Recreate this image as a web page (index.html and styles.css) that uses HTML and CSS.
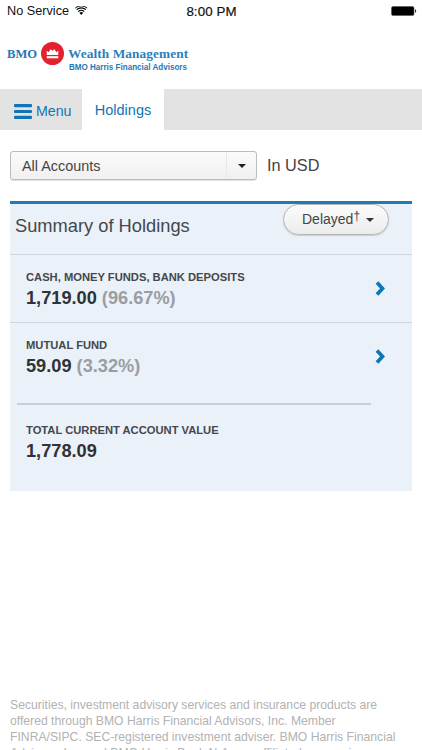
FILE: index.html
```html
<!DOCTYPE html>
<html lang="en">
<head>
<meta charset="utf-8">
<title>Holdings</title>
<link rel="stylesheet" href="styles.css">
</head>
<body>
<div class="screen">
  <div class="status">
    <div class="status-left">
      <span>No Service</span>
      <svg class="wifi" width="12.5" height="9" viewBox="0 0 14 10"><path d="M7 10 4.9 7.6a3 3 0 0 1 4.2 0Z" fill="#000"/><path d="M3.7 6.2a4.8 4.8 0 0 1 6.6 0" fill="none" stroke="#000" stroke-width="1.3"/><path d="M1.8 4.1a7.6 7.6 0 0 1 10.4 0" fill="none" stroke="#000" stroke-width="1.3"/><path d="M.4 2.2a10 10 0 0 1 13.2 0" fill="none" stroke="#000" stroke-width="1.1"/></svg>
    </div>
    <div class="status-time">8:00 PM</div>
    <div class="status-right">
      <svg width="26" height="10" viewBox="0 0 26 10"><rect x=".5" y=".5" width="22.5" height="9" rx="1.5" fill="#000" stroke="#555" stroke-width=".6"/><path d="M24 3.5h.5a.6.6 0 0 1 .6.6v1.8a.6.6 0 0 1-.6.6H24Z" fill="#333"/></svg>
    </div>
  </div>

  <header class="brand">
    <span class="bmo">BMO</span>
    <svg class="roundel" width="23" height="23" viewBox="0 0 24 24"><circle cx="12" cy="12" r="12" fill="#e5202e"/><path d="M6 17v-2.2h12V17Z" fill="#fff"/><path d="M6 13.6V9.2l2 1.5L10 7.6l2 1.6 2-1.6 2 3.1 2-1.5v4.4Z" fill="#fff"/></svg>
    <div class="brand-text">
      <div class="brand-main">Wealth Management</div>
      <div class="brand-sub">BMO Harris Financial Advisors</div>
    </div>
  </header>

  <nav class="tabs">
    <div class="tab-menu">
      <svg width="18" height="15" viewBox="0 0 18 15"><rect width="18" height="3.2" rx="1" fill="#0f75b3"/><rect y="5.9" width="18" height="3.2" rx="1" fill="#0f75b3"/><rect y="11.8" width="18" height="3.2" rx="1" fill="#0f75b3"/></svg>
      <span>Menu</span>
    </div>
    <div class="tab-active">Holdings</div>
  </nav>

  <div class="filter">
    <div class="select">
      <span class="select-label">All Accounts</span>
      <span class="select-btn"><span class="caret caret-dark"></span></span>
    </div>
    <span class="currency">In USD</span>
  </div>

  <section class="card">
    <div class="card-head">
      <h1>Summary of Holdings</h1>
      <div class="pill"><span class="pill-text">Delayed<sup>†</sup></span><span class="caret"></span></div>
    </div>
    <div class="row">
      <div>
        <div class="label">CASH, MONEY FUNDS, BANK DEPOSITS</div>
        <div class="value">1,719.00 <span class="pct">(96.67%)</span></div>
      </div>
      <svg class="chev" width="10" height="15" viewBox="0 0 10 15"><path d="M2 1.5 7.5 7.5 2 13.5" fill="none" stroke="#0f75b3" stroke-width="3.7"/></svg>
    </div>
    <div class="row row-second">
      <div>
        <div class="label">MUTUAL FUND</div>
        <div class="value">59.09 <span class="pct">(3.32%)</span></div>
      </div>
      <svg class="chev" width="10" height="15" viewBox="0 0 10 15"><path d="M2 1.5 7.5 7.5 2 13.5" fill="none" stroke="#0f75b3" stroke-width="3.7"/></svg>
    </div>
    <div class="total">
      <div class="label">TOTAL CURRENT ACCOUNT VALUE</div>
      <div class="value">1,778.09</div>
    </div>
  </section>

  <footer class="legal">Securities, investment advisory services and insurance products are offered through BMO Harris Financial Advisors, Inc. Member FINRA/SIPC. SEC-registered investment adviser. BMO Harris Financial Advisors, Inc. and BMO Harris Bank N.A. are affiliated companies.</footer>
</div>
</body>
</html>
```
FILE: styles.css
```css
* { box-sizing: border-box; }
html, body { margin: 0; padding: 0; background: #fff; }
body { font-family: "Liberation Sans", Arial, sans-serif; }
.screen { width: 422px; height: 750px; overflow: hidden; display: flex; flex-direction: column; }

.status { height: 22px; flex: none; display: flex; align-items: center; justify-content: space-between; padding: 0 5px 0 7px; font-size: 12.7px; color: #111; position: relative; }
.status-left { display: flex; align-items: center; gap: 6px; }
.wifi { margin-top: -2px; }
.status-time { position: absolute; left: 1px; right: 0; text-align: center; font-size: 13.3px; letter-spacing: .1px; -webkit-text-stroke: .2px #111; pointer-events: none; }
.status-right { display: flex; }

.brand { height: 67px; flex: none; display: flex; align-items: flex-start; padding: 20px 0 0 7px; }
.bmo { font-family: "Liberation Serif", serif; font-weight: 700; font-size: 12.6px; color: #1f78b8; margin-top: 5px; width: 34px; }
.roundel { margin-right: 4px; }
.brand-text { margin-top: 5px; }
.brand-main { font-family: "Liberation Serif", serif; font-weight: 700; font-size: 13.3px; line-height: 14px; color: #2b7fbb; letter-spacing: .1px; white-space: nowrap; }
.brand-sub { font-size: 9.6px; font-weight: 700; line-height: 12px; color: #1f78b8; margin-left: 1px; white-space: nowrap; transform: scaleX(.84); transform-origin: left; }

.tabs { height: 41px; flex: none; background: #e3e3e3; display: flex; }
.tab-menu { width: 82px; display: flex; align-items: center; gap: 4px; padding: 3px 0 0 14px; color: #0f75b3; font-size: 14.2px; }
.tab-active { width: 82px; background: #fff; display: flex; align-items: center; justify-content: center; color: #0f75b3; font-size: 14.5px; }

.filter { flex: none; display: flex; align-items: center; margin: 21px 0 0 10px; gap: 10px; height: 29px; }
.select { width: 247px; height: 29px; border: 1px solid #bcbcbc; border-radius: 3px; background: linear-gradient(#fbfbfb, #f0f0f0); display: flex; align-items: stretch; color: #444; font-size: 14.4px; box-shadow: 0 1px 0 #e2e2e2; }
.select-label { flex: 1; display: flex; align-items: center; padding-left: 11px; }
.select-btn { width: 30px; border-left: 1px solid #e8e8e8; display: flex; align-items: center; justify-content: center; }
.currency { font-size: 16.3px; color: #444; margin-top: -1px; }

.caret { display: inline-block; width: 0; height: 0; border-left: 4.5px solid transparent; border-right: 4.5px solid transparent; border-top: 4.5px solid #333; }
.caret-dark { border-top-color: #222; }

.card { flex: none; margin: 21px 10px 0 10px; width: 402px; height: 290px; background: #ebf1f8; border-top: 3px solid #1f7cb5; display: flex; flex-direction: column; }
.card-head { height: 51px; flex: none; display: flex; align-items: flex-start; justify-content: space-between; position: relative; border-bottom: 1px solid #cfd5de; }
.card-head h1 { margin: 10px 0 0 5px; font-size: 18.3px; line-height: 24px; font-weight: 400; color: #44474c; }
.pill { position: absolute; right: 23px; top: 0; height: 31px; width: 106px; border: 1px solid #b5b5b5; border-radius: 16px; background: linear-gradient(#fbfbfb, #ececec); display: flex; align-items: center; gap: 6px; padding-left: 18px; font-size: 14px; color: #444; box-shadow: 0 1px 1px #ccc; }
.pill-text { margin-top: -2px; }
.pill sup { font-size: 12px; line-height: 0; vertical-align: 4px; }

.row { height: 68px; flex: none; display: flex; justify-content: space-between; align-items: flex-start; padding: 15px 27px 0 16px; border-bottom: 1px solid #cfd5de; }
.row-second { height: 80px; border-bottom: 0; }
.row .chev { margin-top: 11px; }
.label { font-size: 11.2px; line-height: 14px; font-weight: 700; color: #44474c; }
.value { font-size: 18.2px; line-height: 22px; font-weight: 700; color: #2f3236; margin-top: 3px; }
.pct { color: #9a9da2; }

.total { margin: 0 0 0 7px; width: 354px; border-top: 2px solid #c9ced8; padding: 18px 0 0 9px; }

.legal { margin: 206px 0 0 10px; flex: none; font-size: 12.2px; line-height: 16px; color: #b2b2b2; width: 392px; }
```
